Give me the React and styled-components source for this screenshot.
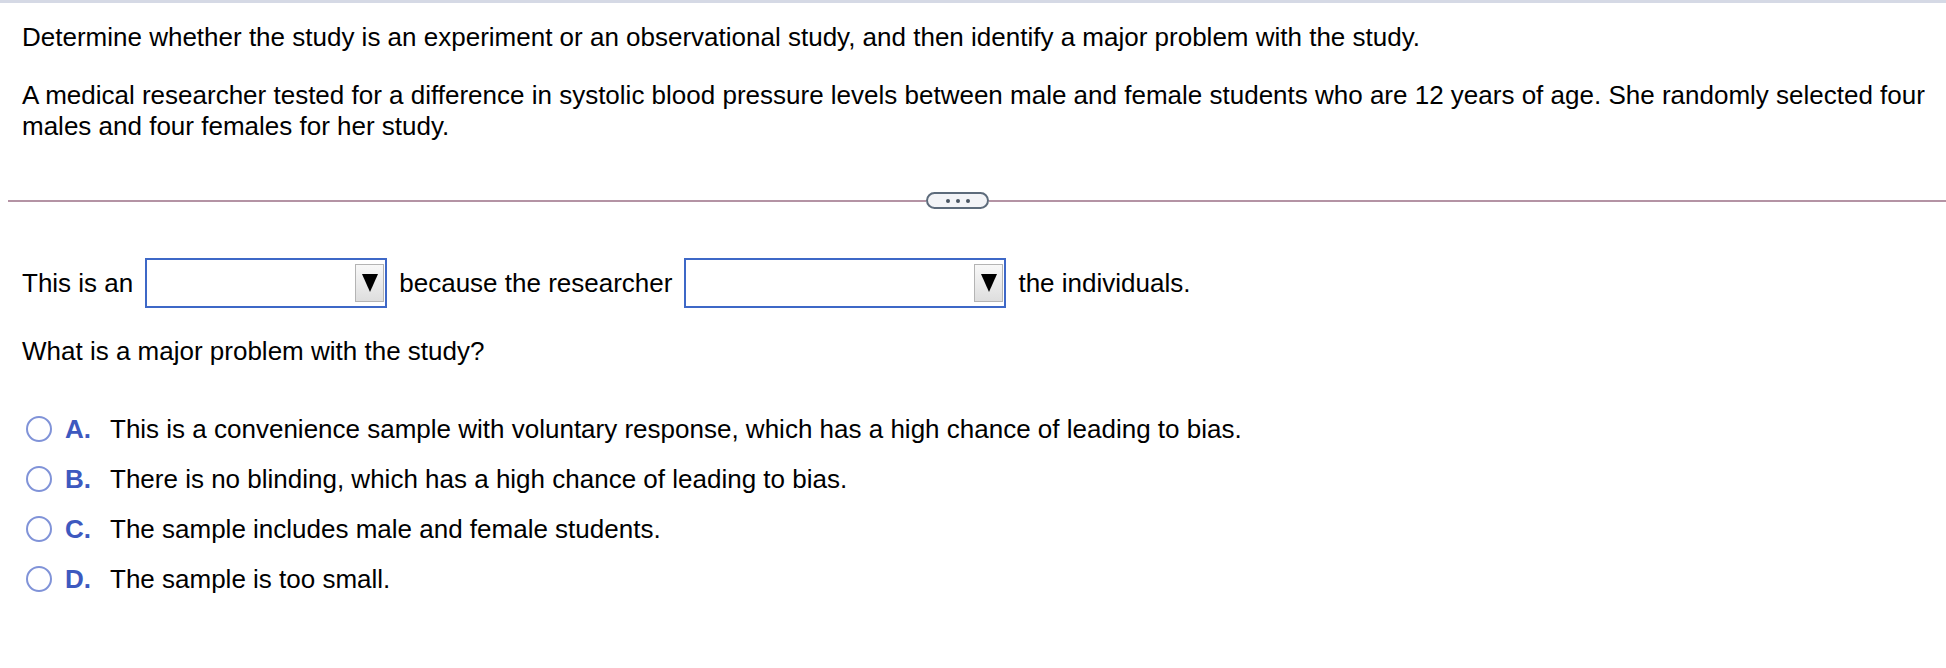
import React from 'react';
import styled, { createGlobalStyle } from 'styled-components';

const GlobalStyle = createGlobalStyle`
    html, body {
        margin: 0;
        padding: 0;
        background: #fff;
    }
    body {
        font-family: "Liberation Sans", Arial, Helvetica, sans-serif;
        color: #000;
    }
`;

const options = [
    { key: 'A', text: 'This is a convenience sample with voluntary response, which has a high chance of leading to bias.' },
    { key: 'B', text: 'There is no blinding, which has a high chance of leading to bias.' },
    { key: 'C', text: 'The sample includes male and female students.' },
    { key: 'D', text: 'The sample is too small.' },
];

const Dropdown = ({ width }) => (
    <SelectBox $width={width}>
        <ArrowButton>
            <Triangle />
        </ArrowButton>
    </SelectBox>
);

const App = () => {
    return (
        <>
            <GlobalStyle />
            <Page>
                <Question>
                    <Instruction>
                        Determine whether the study is an experiment or an observational study, and then identify a major problem with the study.
                    </Instruction>
                    <Scenario>
                        A medical researcher tested for a difference in systolic blood pressure levels between male and female students who are 12 years of age. She randomly selected four males and four females for her study.
                    </Scenario>
                </Question>

                <Divider>
                    <LineLeft />
                    <MorePill>
                        <Dot /><Dot /><Dot />
                    </MorePill>
                    <LineRight />
                </Divider>

                <Answer>
                    <FillRow>
                        <span>This is an</span>
                        <Dropdown width={242} />
                        <span>because the researcher</span>
                        <Dropdown width={322} />
                        <span>the individuals.</span>
                    </FillRow>

                    <Prompt>What is a major problem with the study?</Prompt>

                    <OptionList>
                        {options.map(opt => (
                            <Option key={opt.key}>
                                <Radio />
                                <OptionKey>{opt.key}.</OptionKey>
                                <OptionText>{opt.text}</OptionText>
                            </Option>
                        ))}
                    </OptionList>
                </Answer>
            </Page>
        </>
    );
};

const Page = styled.div`
    width: 1946px;
    min-height: 668px;
    box-sizing: border-box;
    border-top: 3px solid #d5d9e5;
    font-size: 26px;
`;

const Question = styled.div`
    padding: 19px 4px 0 22px;
`;

const Instruction = styled.p`
    margin: 0;
    line-height: 30px;
`;

const Scenario = styled.p`
    margin: 28px 0 0 0;
    line-height: 31px;
`;

const Divider = styled.div`
    display: flex;
    align-items: center;
    margin: 50px 0 0 8px;
    height: 17px;
`;

const LineLeft = styled.div`
    width: 918px;
    height: 2px;
    background: #b493a4;
`;

const LineRight = styled.div`
    flex: 1;
    height: 2px;
    background: #b493a4;
`;

const MorePill = styled.div`
    width: 63px;
    height: 17px;
    box-sizing: border-box;
    border: 2px solid #5d6b7b;
    border-radius: 9px;
    background: #f3f4f7;
    display: flex;
    align-items: center;
    justify-content: center;
    gap: 6px;
`;

const Dot = styled.span`
    width: 4px;
    height: 4px;
    border-radius: 50%;
    background: #4a5563;
`;

const Answer = styled.div`
    padding: 0 22px;
`;

const FillRow = styled.div`
    display: flex;
    align-items: center;
    gap: 12px;
    margin-top: 49px;
    height: 50px;
    line-height: 30px;
`;

const SelectBox = styled.div`
    width: ${({ $width }) => $width}px;
    height: 50px;
    box-sizing: border-box;
    border: 2px solid #3e68c7;
    background: #fff;
    display: flex;
    align-items: center;
    justify-content: flex-end;
    padding-right: 1px;
`;

const ArrowButton = styled.div`
    width: 29px;
    height: 38px;
    box-sizing: border-box;
    border: 1px solid #b4b4b4;
    background: linear-gradient(#f8f8f8, #dedede);
    display: flex;
    align-items: center;
    justify-content: center;
`;

const Triangle = styled.span`
    width: 0;
    height: 0;
    border-left: 8px solid transparent;
    border-right: 8px solid transparent;
    border-top: 18px solid #000;
`;

const Prompt = styled.div`
    margin-top: 28px;
    line-height: 30px;
`;

const OptionList = styled.div`
    display: flex;
    flex-direction: column;
    gap: 20px;
    margin-top: 48px;
`;

const Option = styled.div`
    display: flex;
    align-items: center;
    height: 30px;
`;

const Radio = styled.span`
    width: 26px;
    height: 26px;
    box-sizing: border-box;
    border: 2px solid #8093d8;
    border-radius: 50%;
    margin-left: 4px;
    flex-shrink: 0;
`;

const OptionKey = styled.span`
    width: 45px;
    margin-left: 13px;
    font-weight: bold;
    color: #3d59bf;
`;

const OptionText = styled.span`
    line-height: 30px;
`;

export default App;
